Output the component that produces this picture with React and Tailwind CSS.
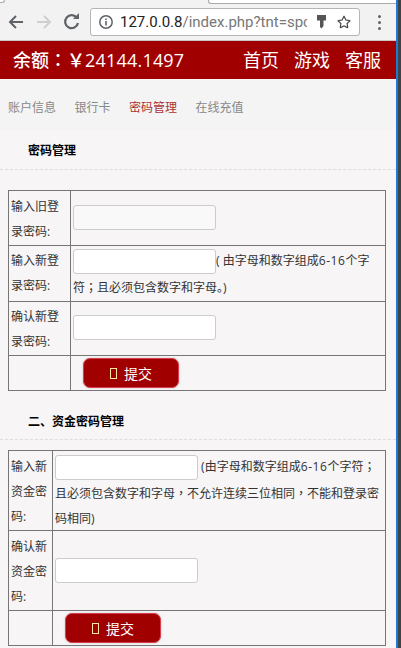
import React from "react";
import { FaRegStar } from "react-icons/fa";

const font = "font-['Open_Sans','Noto_Sans_CJK_SC',sans-serif]";

// centred fullwidth punctuation, as in the reference
function P({ children }) {
  return <span className="font-['Noto_Sans_CJK_TC',sans-serif]">{children}</span>;
}

function Field({ bg = "bg-white" }) {
  return (
    <input
      type="text"
      className={`w-[143px] h-[25px] ${bg} border border-[#ccc] rounded-[3px] align-middle`}
    />
  );
}

function SubmitButton() {
  return (
    <button className="flex items-center justify-center gap-[7px] w-[96px] h-[30px] bg-[#a00000] border border-[#d9404f] rounded-[7px] text-white text-[14px] shadow-[0_0_2px_#bbb]">
      <span className="w-[7px] h-[11px] border border-[#ffe9a0]"></span>
      <span>提交</span>
    </button>
  );
}

function Row({ label, labelW, labelPt = "pt-[3px]", children, h, last }) {
  return (
    <div className={`flex ${last ? "" : "border-b border-[#767676]"}`} style={{ height: h }}>
      <div className={`${labelW} ${labelPt} shrink-0 border-r border-[#767676] pl-[2px] leading-[25px]`}>{label}</div>
      <div className="flex-1 min-w-0 pl-[2px]">{children}</div>
    </div>
  );
}

export default function App() {
  return (
    <div className={`${font} flex w-[401px] h-[648px] overflow-hidden text-[12px] text-[#333]`}>
      <div className="w-[396px] shrink-0 bg-[#f7f5f6]">
        {/* browser chrome */}
        <div className="relative h-[41px] bg-[#f2f2f2] flex items-center border-b border-[#c8c8c8]">
          <div className="absolute top-0 left-[208px] right-0 h-[4px] bg-white border-b border-l border-[#aaa] rounded-bl-[3px]"></div>
          <div className="absolute top-0 left-0 w-[5px] h-[3px] bg-white border-b border-r border-[#aaa] rounded-br-[3px]"></div>
          <svg width="86" height="24" viewBox="0 0 86 24" className="ml-[6px] mt-[4px] shrink-0" fill="none" strokeWidth="2">
            <path d="M17 12H4M10 6l-6 6 6 6" stroke="#5f6368" />
            <path d="M31 12h13M38 6l6 6-6 6" stroke="#cfcfcf" />
            <path d="M71 8a6.500 6.500 0 1 0 1 5" stroke="#5f6368" strokeWidth="2.200" />
            <path d="M67 9h6V3z" fill="#5f6368" />
          </svg>
          <div className="ml-[-2px] w-[270px] h-[28px] mt-[4px] bg-white border border-[#b5b5b5] rounded-[3px] flex items-center pl-[7px] pr-[8px] font-['Roboto',sans-serif]">
            <svg width="16" height="16" viewBox="0 0 16 16" fill="none" className="shrink-0">
              <circle cx="8" cy="8" r="6.200" stroke="#5f6368" strokeWidth="1.500" />
              <path d="M8 7v4.500M8 4.400v1.600" stroke="#5f6368" strokeWidth="1.600" />
            </svg>
            <div className="ml-[6px] w-[190px] overflow-hidden whitespace-nowrap text-[15px] text-[#777]">
              <span className="text-[#222]">127.0.0.8</span>/index.php?tnt=spc
            </div>
            <svg width="12" height="14" viewBox="0 0 12 14" className="ml-[9px] shrink-0" fill="#555">
              <path d="M1 0h9v5.500H7.500V11L5.500 13.500 4 12V5.500H1z" />
            </svg>
            <FaRegStar className="ml-[9px] text-[14px] text-[#444] shrink-0" />
          </div>
          <div className="ml-[18px] mt-[4px] flex flex-col gap-[3px]">
            <span className="w-[3px] h-[3px] rounded-full bg-[#5f6368]"></span>
            <span className="w-[3px] h-[3px] rounded-full bg-[#5f6368]"></span>
            <span className="w-[3px] h-[3px] rounded-full bg-[#5f6368]"></span>
          </div>
        </div>

        {/* top red bar */}
        <div className="h-[38px] bg-[#a00000] text-white flex items-center justify-between pl-[13px] pr-[15px] text-[18px] font-medium">
          <div>余额<P>：</P>￥<span className="tracking-[0.2px]">24144.1497</span></div>
          <div className="flex gap-[15px] font-normal">
            <span>首页</span>
            <span>游戏</span>
            <span>客服</span>
          </div>
        </div>

        {/* tabs */}
        <div className="mt-[2px] h-[49px] bg-[#f4f4f4] flex items-center pl-[8px] gap-[18.500px] text-[#888] pt-[5px]">
          <span>账户信息</span>
          <span>银行卡</span>
          <span className="text-[#a33]">密码管理</span>
          <span>在线充值</span>
        </div>

        {/* section 1 */}
        <div className="h-[40px] border-b border-dashed border-[#ddd] pl-[28px] pt-[10px] font-bold text-black leading-[22px]">
          密码管理
        </div>

        <div className="mt-[20px] ml-[8px] w-[378px] border border-[#767676]">
          <Row label="输入旧登录密码:" labelW="w-[62px]" h={55}>
            <div className="pt-[14px]"><Field bg="bg-[#f9f9f9]" /></div>
          </Row>
          <Row label="输入新登录密码:" labelW="w-[62px]" labelPt="pt-[2px]" h={56}>
            <div className="leading-[25px] pt-[2px]">
              <Field />( 由字母和数字组成<span className="tracking-[0.6px]">6-16</span>个字符<P>；</P>且必须包含数字和字母。)
            </div>
          </Row>
          <Row label="确认新登录密码:" labelW="w-[62px]" labelPt="pt-[2px]" h={54}>
            <div className="pt-[13px]"><Field /></div>
          </Row>
          <Row labelW="w-[62px]" h={34} last>
            <div className="pl-[10px] pt-[2px]"><SubmitButton /></div>
          </Row>
        </div>

        {/* section 2 */}
        <div className="h-[49px] border-b border-dashed border-[#ddd] pl-[28px] pt-[20px] font-bold text-black leading-[22px]">
          二、资金密码管理
        </div>

        <div className="mt-[10px] ml-[8px] w-[378px] border border-[#767676]">
          <Row label="输入新资金密码:" labelW="w-[44px]" h={80}>
            <div className="leading-[25px] pt-[2px]">
              <Field /> (由字母和数字组成<span className="tracking-[0.6px]">6-16</span>个字符<P>；</P>且必须包含数字和字母<P>，</P>不允许连续三位相同<P>，</P>不能和登录密码相同)
            </div>
          </Row>
          <Row label="确认新资金密码:" labelW="w-[44px]" h={80}>
            <div className="pt-[27px]"><Field /></div>
          </Row>
          <Row labelW="w-[44px]" h={34} last>
            <div className="pl-[10px] pt-[2px]"><SubmitButton /></div>
          </Row>
        </div>
      </div>

      {/* window edge */}
      <div className="w-[2px] shrink-0 bg-[#1f78d1]"></div>
      <div className="flex-1 bg-[#3c4449]"></div>
    </div>
  );
}
